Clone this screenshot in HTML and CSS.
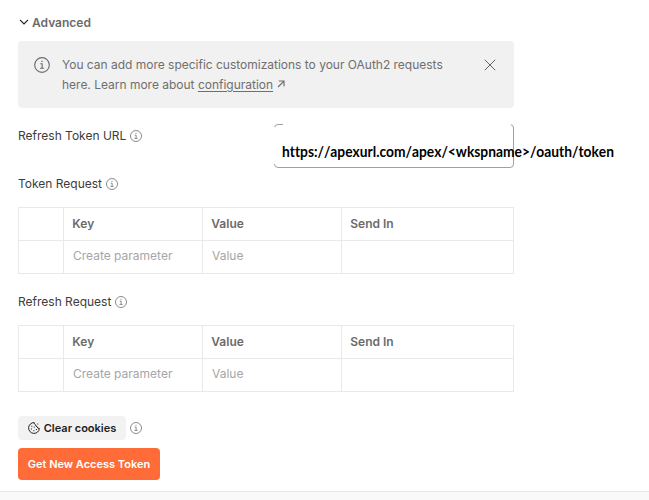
FILE: index.html
```
<!DOCTYPE html>
<html lang="en">
<head>
<meta charset="utf-8">
<title>Advanced token options</title>
<link rel="stylesheet" href="styles.css">
</head>
<body>
<svg width="0" height="0" class="defs">
  <symbol id="info" viewBox="0 0 12 12"><circle cx="6" cy="6" r="5.5"/><path d="M4.7 5.1H6.1V8.4M4.5 8.4H7.6"/><path d="M5.5 3.3H6.5"/></symbol>
</svg>
<main class="panel">
  <h2 class="section-title">
    <svg class="chevron" viewBox="0 0 10 6"><path d="M1 .8 5 4.8 9 .8"/></svg>
    <span>Advanced</span>
  </h2>
  <section class="notice">
    <svg class="icon notice-icon"><use href="#info"/></svg>
    <p class="notice-text">You can add more specific customizations to your OAuth2 requests<br>here. Learn more about <a class="link">configuration</a><svg class="arrow" viewBox="0 0 8 8"><path d="M1 7 6.7 1.3M1.8 1H7V6.2"/></svg></p>
    <svg class="close" viewBox="0 0 12 12"><path d="M.8.8 11.2 11.2M11.2.8.8 11.2"/></svg>
  </section>
  <div class="field">
    <div class="label"><span>Refresh Token URL</span><svg class="icon"><use href="#info"/></svg></div>
    <div class="input"><span class="url">https://apexurl.com/apex/&lt;wkspname&gt;/oauth/token</span></div>
  </div>
  <div class="label token-label"><span>Token Request</span><svg class="icon"><use href="#info"/></svg></div>
  <div class="grid">
    <div class="cell"></div><div class="cell head">Key</div><div class="cell head">Value</div><div class="cell head">Send In</div>
    <div class="cell"></div><div class="cell hint">Create parameter</div><div class="cell hint">Value</div><div class="cell"></div>
  </div>
  <div class="label refresh-label"><span>Refresh Request</span><svg class="icon"><use href="#info"/></svg></div>
  <div class="grid">
    <div class="cell"></div><div class="cell head">Key</div><div class="cell head">Value</div><div class="cell head">Send In</div>
    <div class="cell"></div><div class="cell hint">Create parameter</div><div class="cell hint">Value</div><div class="cell"></div>
  </div>
  <div class="cookies">
    <button class="btn clear"><svg class="cookie" viewBox="0 0 12 12"><path d="M6.2.6A5.4 5.4 0 1 0 11.4 6.5 2 2 0 0 1 9.2 4.7 2 2 0 0 1 7.5 2.7 2 2 0 0 1 6.2.6Z"/><path d="M3.3 4.2h1M5.7 5.2h1M3 7h1M5.4 8.7h1M7.9 7.5h1M9.3 2h.9"/></svg><span>Clear cookies</span></button>
    <svg class="icon"><use href="#info"/></svg>
  </div>
  <button class="btn primary"><span>Get New Access Token</span></button>
</main>
<footer class="footer"></footer>
</body>
</html>
```
FILE: styles.css
```
* { box-sizing: border-box; }
body {
  margin: 0;
  height: 500px;
  overflow: hidden;
  display: flex;
  flex-direction: column;
  background: #fff;
  font: 12px/20px Inter, sans-serif;
  color: #3c3c3c;
}
svg { display: block; flex: none; fill: none; stroke: currentColor; }
.defs { position: absolute; }
.panel { width: 514px; height: 491px; padding: 13px 0 0 18px; }
.section-title {
  display: flex;
  align-items: center;
  gap: 3px;
  height: 20px;
  margin: 0 0 8px;
  padding-left: 1px;
  font-size: 12px;
  font-weight: 600;
  color: #6b6b6b;
}
.chevron { width: 10px; height: 6px; margin-bottom: 2px; color: #212121; stroke-width: 1.2; }
.notice {
  display: flex;
  height: 67px;
  padding: 14px 18px 0 16px;
  border-radius: 4px;
  background: #f1f1f1;
  color: #6f6f6f;
}
.icon { width: 12px; height: 12px; color: #777; stroke-width: .85; }
.notice-icon { width: 16px; height: 16px; margin: 2px 12px 0 0; color: #6b6b6b; }
.notice-text { flex: 1; margin: 0; white-space: nowrap; letter-spacing: -.01px; }
.link { text-decoration: underline; text-underline-offset: 2px; }
.arrow { display: inline-block; width: 8px; height: 8px; margin-left: 4px; vertical-align: 1px; stroke-width: 1.2; }
.close { width: 12px; height: 12px; margin-top: 4px; color: #666; stroke-width: 1; }
.field { display: flex; justify-content: space-between; height: 60px; padding-top: 16px; }
.label { display: flex; align-items: center; gap: 4px; height: 20px; }
.label .icon { margin-bottom: 1px; }
.field .label { margin-top: 2px; }
.input {
  position: relative;
  width: 240px;
  height: 44px;
  padding: 16px 0 0 7px;
  border: 1px solid #a0a0a0;
  border-radius: 4px;
}
.input::before {
  content: "";
  position: absolute;
  inset: -1px 2px auto 8px;
  height: 1px;
  background: #fff;
}
.input::after {
  content: "";
  position: absolute;
  top: 2px;
  bottom: 3px;
  left: -1px;
  width: 1px;
  background: #fff;
}
.url {
  display: inline-block;
  font: bold 15px/20px Lato, sans-serif;
  font-variant-ligatures: none;
  font-kerning: none;
  color: #000;
  white-space: nowrap;
  transform: scaleX(.92);
  transform-origin: left;
}
.token-label { margin: 6px 0 13px; }
.refresh-label { margin: 18px 0 13px; }
.grid {
  display: grid;
  grid-template-columns: 45px 139px 139px 172px;
  grid-auto-rows: 33px;
  width: 496px;
  border: solid #e9e9e9;
  border-width: 1px 0 0 1px;
}
.cell { padding: 6px 8px; border: solid #e9e9e9; border-width: 0 1px 1px 0; }
.head { padding-left: 8.3px; font-weight: 600; color: #6b6b6b; }
.hint { padding: 5px 9px; color: #a6a6a6; }
.cookies { display: flex; align-items: center; gap: 4px; margin: 24px 0 8px; }
.btn {
  display: flex;
  align-items: center;
  justify-content: center;
  gap: 4px;
  padding: 0;
  border: 0;
  border-radius: 4px;
  font: 600 11px/16px Inter, sans-serif;
  white-space: nowrap;
}
.clear { width: 108px; height: 24px; background: #f2f2f2; color: #212121; }
.cookie { width: 12px; height: 12px; stroke-width: 1; }
.primary { width: 142px; height: 32px; background: #ff6c37; color: #fff; }
.footer { height: 9px; border-top: 1px solid #e6e6e6; background: #f9f9f9; }
```
